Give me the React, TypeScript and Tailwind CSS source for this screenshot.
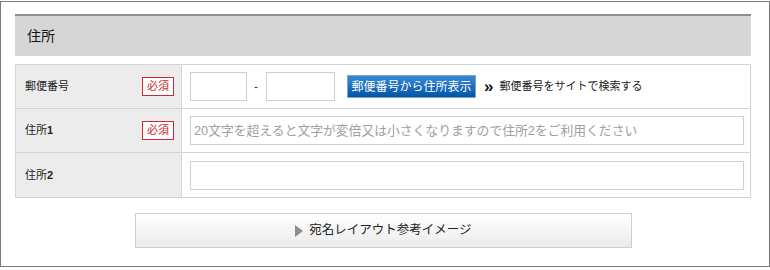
import React from "react";

const font = { fontFamily: '"Liberation Sans","Noto Sans CJK JP",sans-serif' };

const Required = () => (
  <span className="flex h-[19px] w-[32px] items-center justify-center border border-[#cc2b2b] bg-white text-[11px] leading-none text-[#cc1f1f]">
    必須
  </span>
);

interface RowProps {
  label: React.ReactNode;
  required?: boolean;
  height: string;
  children: React.ReactNode;
}

const Row: React.FC<RowProps> = ({ label, required, height, children }) => (
  <div className={`flex border-b border-[#d4d4d4] ${height}`}>
    <div className="flex w-[166px] shrink-0 items-center justify-between border-r border-[#d4d4d4] bg-[#ececec] pl-[9px] pr-[7px] text-[11px] text-[#222]">
      <span>{label}</span>
      {required && <Required />}
    </div>
    <div className="flex flex-1 items-center pl-[8px] pr-[6px]">{children}</div>
  </div>
);

export default function App() {
  return (
    <div style={font} className="bg-white">
      <div className="mt-px h-[266px] w-[770px] border border-[#7a7a7a] bg-white pl-[14px] pr-[18px] pt-[12px]">
        <div className="flex h-[42px] items-center border-t-2 border-[#8e8e8e] bg-[#d6d6d6] pl-[12px] text-[14px] text-[#111]">
          住所
        </div>

        <div className="mt-[8px] border-l border-r border-t border-[#d4d4d4]">
          <Row label="郵便番号" required height="h-[44px]">
            <input className="h-[29px] w-[57px] border border-[#cfcfcf] bg-white outline-none" />
            <span className="mx-[7px] w-[5px] text-[12px] text-[#333]">-</span>
            <input className="h-[29px] w-[69px] border border-[#cfcfcf] bg-white outline-none" />
            <button className="ml-[12px] flex h-[23px] w-[129px] items-center justify-center border border-[#7fa6cc] bg-gradient-to-b from-[#3689d6] to-[#0055a5] text-[12px] text-white">
              郵便番号から住所表示
            </button>
            <span className="ml-[8px] text-[17px] font-bold leading-none text-[#111]">»</span>
            <a href="#" className="ml-[6px] text-[11px] text-[#222]">
              郵便番号をサイトで検索する
            </a>
          </Row>
          <Row
            label={
              <>
                住所<b>1</b>
              </>
            }
            required
            height="h-[44px]"
          >
            <input
              className="h-[29px] w-full border border-[#cfcfcf] bg-white px-[3px] text-[12.8px] text-[#333] outline-none placeholder:text-[#a0a0a0]"
              placeholder="20文字を超えると文字が変倍又は小さくなりますので住所2をご利用ください"
            />
          </Row>
          <Row
            label={
              <>
                住所<b>2</b>
              </>
            }
            height="h-[45px]"
          >
            <input className="h-[29px] w-full border border-[#cfcfcf] bg-white outline-none" />
          </Row>
        </div>

        <button className="ml-[120px] mt-[15px] flex h-[35px] w-[497px] items-center justify-center border border-[#cfcfcf] bg-gradient-to-b from-white to-[#ebebeb] text-[12.5px] text-[#222]">
          <svg width="8" height="12" viewBox="0 0 8 12" className="mr-[6px]">
            <path d="M0 0 L8 6 L0 12 Z" fill="#8e8e86" />
          </svg>
          宛名レイアウト参考イメージ
        </button>
      </div>
    </div>
  );
}
